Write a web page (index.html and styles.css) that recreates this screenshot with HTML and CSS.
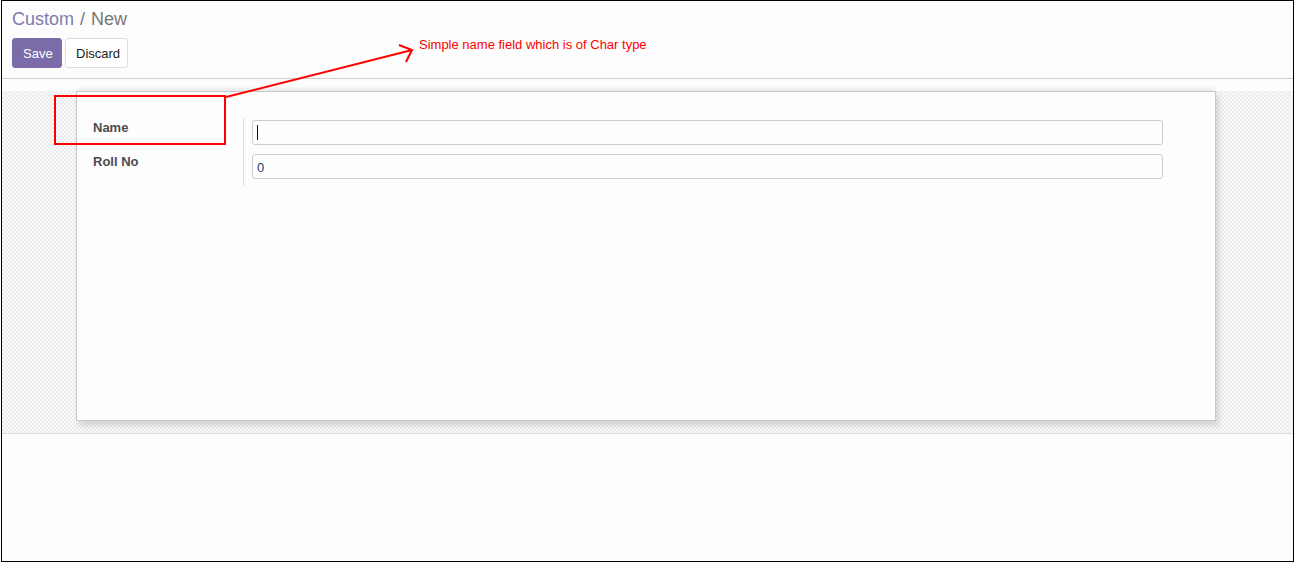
FILE: index.html
```html
<!DOCTYPE html>
<html>
<head>
<meta charset="utf-8">
<link rel="stylesheet" href="styles.css">
</head>
<body>
<div class="frame">
  <header class="control-panel">
    <div class="breadcrumb"><span class="crumb-link">Custom</span><span class="crumb-sep">/</span><span class="crumb-active">New</span></div>
    <div class="buttons">
      <button class="btn btn-primary">Save</button>
      <button class="btn btn-secondary">Discard</button>
    </div>
  </header>
  <div class="spacer"></div>
  <div class="sheet-bg">
    <div class="sheet">
      <div class="group">
        <div class="labels">
          <div class="label">Name</div>
          <div class="label">Roll No</div>
        </div>
        <div class="fields">
          <div class="input"><span class="caret"></span></div>
          <div class="input"><span class="value">0</span></div>
        </div>
      </div>
    </div>
  </div>
  <div class="annotation">
    <svg width="700" height="160" viewBox="0 0 700 160">
      <rect x="55" y="96" width="170" height="48" fill="none" stroke="#ff0000" stroke-width="2"/>
      <line x1="226" y1="97" x2="412" y2="50" stroke="#ff0000" stroke-width="2"/>
      <polyline points="399,45 412,50 406,62" fill="none" stroke="#ff0000" stroke-width="2"/>
    </svg>
    <span class="note">Simple name field which is of Char type</span>
  </div>
</div>
</body>
</html>
```

FILE: styles.css
```css
html, body {
  margin: 0;
  padding: 0;
  background: #fdfdfd;
}

.frame {
  position: relative;
  box-sizing: border-box;
  width: 1293px;
  height: 562px;
  margin-left: 1px;
  border: 1px solid #000;
  background: #fdfdfd;
  font-family: "Liberation Sans", Arial, sans-serif;
  overflow: hidden;
}

.control-panel {
  height: 77px;
  border-bottom: 1px solid #cfcfcf;
  padding: 0 0 0 10px;
  box-sizing: content-box;
}

.breadcrumb {
  font-size: 18px;
  line-height: 22px;
  padding-top: 7px;
  height: 22px;
}

.crumb-link { color: #7c7bad; }
.crumb-sep { color: #777; margin: 0 6px; }
.crumb-active { color: #777; }

.buttons {
  display: flex;
  gap: 3px;
  margin-top: 8px;
}

.btn {
  height: 30px;
  padding: 0 10px;
  font-family: "Liberation Sans", Arial, sans-serif;
  font-size: 13px;
  border-radius: 3px;
  box-sizing: border-box;
  cursor: pointer;
}

.btn-primary {
  background: #7c6ba9;
  color: #fff;
  border: 1px solid #7c6ba9;
  width: 50px;
}

.btn-secondary {
  background: #fff;
  color: #222;
  border: 1px solid #ddd;
  width: 63px;
}

.spacer {
  height: 12px;
}

.sheet-bg {
  height: 342px;
  border-bottom: 1px solid #dcdcdc;
  background-color: #fafafa;
  background-image: conic-gradient(#ececec 25%, transparent 25% 50%, #ececec 50% 75%, transparent 75%);
  background-size: 4px 4px;
  padding-left: 74px;
}

.sheet {
  box-sizing: border-box;
  width: 1140px;
  height: 330px;
  background: #fdfdfd;
  border: 1px solid #c8c8c8;
  box-shadow: 3px 5px 6px rgba(0, 0, 0, 0.13), 0 -4px 3px -1px rgba(0, 0, 0, 0.07);
  padding: 26px 0 0 16px;
}

.group {
  display: flex;
}

.labels {
  width: 150px;
  border-right: 1px solid #ddd;
  height: 68px;
}

.label {
  font-size: 13px;
  font-weight: bold;
  color: #4c4c4c;
  height: 34px;
  line-height: 20px;
  box-sizing: border-box;
}

.fields {
  display: flex;
  flex-direction: column;
  gap: 9px;
  margin-left: 8px;
  padding-top: 2px;
}

.input {
  box-sizing: border-box;
  width: 911px;
  height: 25px;
  border: 1px solid #cdcdcd;
  border-radius: 3px;
  background: #fdfdfd;
  display: flex;
  align-items: center;
  padding-left: 4px;
}

.caret {
  display: block;
  width: 1px;
  height: 15px;
  background: #111;
}

.value {
  font-size: 13px;
  color: #21406f;
  margin-top: 1px;
}

.annotation {
  position: absolute;
  left: -2px;
  top: -1px;
  width: 700px;
  height: 160px;
  pointer-events: none;
}

.annotation svg {
  position: absolute;
  left: 0;
  top: 0;
}

.note {
  position: absolute;
  left: 419px;
  top: 37px;
  font-size: 13px;
  line-height: 16px;
  color: #ff0000;
  white-space: nowrap;
}
```
